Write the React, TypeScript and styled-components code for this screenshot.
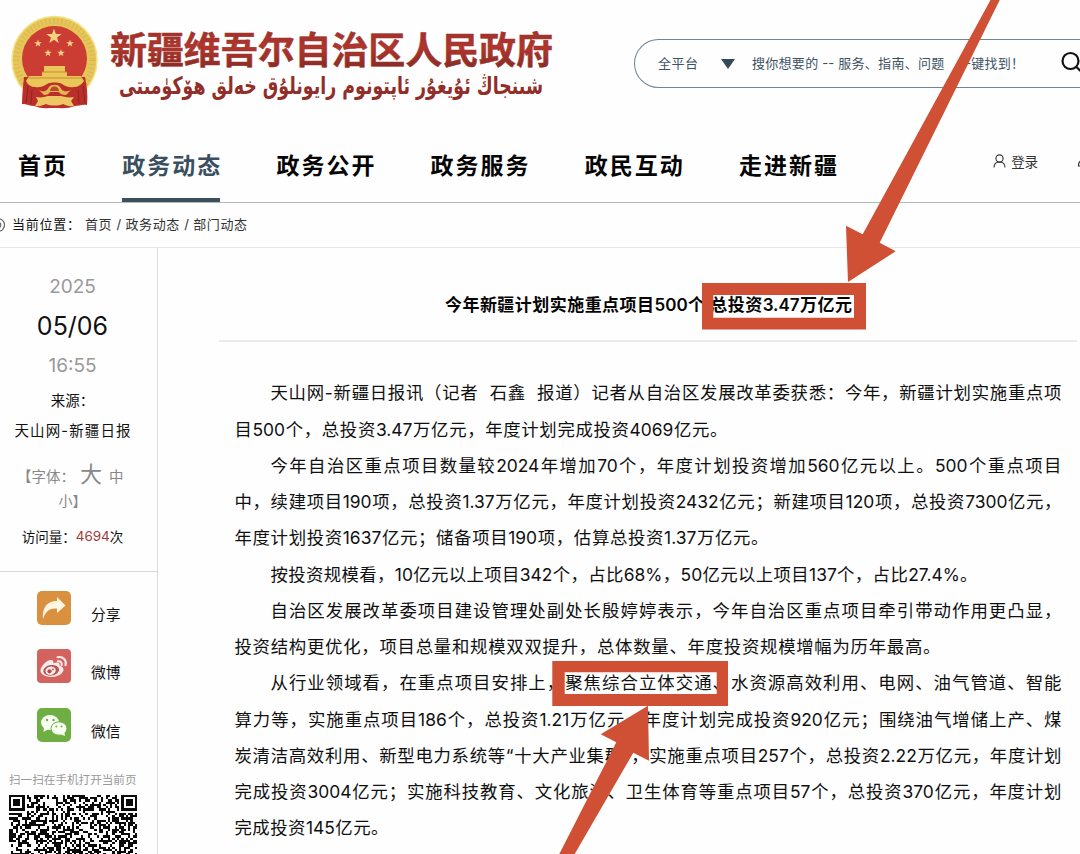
import React from 'react';
import styled, { createGlobalStyle } from 'styled-components';

const GlobalStyle = createGlobalStyle`
  * { box-sizing: border-box; }
  body {
    margin: 0;
    background: #fff;
    color: #111;
    font-family: Inter, "Noto Sans CJK SC", sans-serif;
    overflow: hidden;
  }
`;

const Page = styled.div`
  position: relative;
  width: 1080px;
  height: 854px;
  overflow: hidden;
  background: #fefefe;
`;

/* One line of text spread evenly over a measured width. */
const Spread = styled.span<{ $w: number }>`
  display: block;
  flex: none;
  width: ${(p) => p.$w}px;
  white-space: nowrap;
  text-align: justify;
  text-align-last: justify;
`;

const Header = styled.header`
  display: flex;
  justify-content: space-between;
  height: 130px;
`;

const Brand = styled.svg`
  display: block;
  flex: none;
  width: 590px;
  height: 130px;
  overflow: visible;
`;

const Search = styled.div`
  display: flex;
  align-items: center;
  width: 446px;
  height: 49px;
  margin-top: 39px;
  padding: 0 0 1px 23px;
  border: 1px solid #74848f;
  border-right: 0;
  border-radius: 25px 0 0 25px;
  color: #3d5364;
  font-size: 13px;
  line-height: 20px;
  flex: none;
`;

const Caret = styled.i`
  flex: none;
  margin: 1px 17px 0 23px;
  border: 7px solid transparent;
  border-top: 10px solid #34495a;
  border-bottom: 0;
`;

const SearchIcon = styled.svg`
  flex: none;
  width: 24px;
  height: 24px;
  margin-left: 37px;
`;

const Nav = styled.nav`
  display: flex;
  align-items: stretch;
  height: 73px;
  padding-left: 18px;
  border-bottom: 1px solid #b4b8ba;
`;

const NavItem = styled.a<{ $w: number; $active?: boolean }>`
  width: ${(p) => p.$w}px;
  flex: none;
  margin-right: 56.2px;
  padding-top: 18px;
  border-bottom: 4px solid ${(p) => (p.$active ? '#3c4f5d' : 'transparent')};
  color: ${(p) => (p.$active ? '#3a5060' : '#050505')};
  font-size: 23px;
  font-weight: 600;
  line-height: 37px;
  white-space: nowrap;
  text-align-last: justify;
`;

const Account = styled.div`
  display: flex;
  align-items: center;
  height: 20px;
  margin: 21px 0 0 100px;
  gap: 5px;
  color: #333;
  font-size: 13.5px;
  flex: none;
  svg { flex: none; }
`;

const Crumbs = styled.div`
  display: flex;
  align-items: center;
  height: 45px;
  padding-bottom: 3px;
  border-bottom: 1px solid #e6e6e6;
  font-size: 13px;
  color: #333;
`;

const CrumbLabel = styled(Spread)`
  margin-right: 5px;
  color: #111;
`;

const Pin = styled.svg`
  width: 5px;
  height: 16px;
  margin-right: 7px;
`;

const Body = styled.div`
  display: flex;
  height: 606px;
`;

const Side = styled.aside`
  width: 158px;
  flex: none;
  border-right: 1px solid #ddd;
`;

const Meta = styled.div`
  height: 324px;
  padding: 18px 0 0;
  border-bottom: 1px solid #d8d8d8;
`;

const MetaRow = styled.div<{ $h: number; $size: number; $tone?: string }>`
  display: flex;
  justify-content: center;
  align-items: center;
  width: 145px;
  height: ${(p) => p.$h}px;
  font-size: ${(p) => p.$size}px;
  color: ${(p) => p.$tone ?? '#111'};
  white-space: nowrap;
`;

const SizeRow = styled.div`
  display: flex;
  align-items: baseline;
  height: 46px;
  width: 145px;
  padding: 12px 0 0 17px;
  color: #888;
  font-size: 14.5px;
  line-height: 34px;
  white-space: nowrap;
`;

const Big = styled.span`
  font-size: 22px;
  margin: 0 7px 0 5px;
`;

const Count = styled.span`
  color: #a13a36;
`;

const Shares = styled.div`
  display: flex;
  flex-direction: column;
  gap: 24.3px;
  padding: 19px 0 0 37px;
`;

const ShareRow = styled.div`
  display: flex;
  height: 34px;
  gap: 20px;
  font-size: 14.8px;
  line-height: 20px;
  svg { flex: none; }
  span { padding-top: 14px; }
`;

const ScanNote = styled.div`
  padding: 28px 0 0 9px;
  color: #999;
  font-size: 11.6px;
  line-height: 20px;
`;

const QrSvg = styled.svg`
  display: block;
  width: 128px;
  height: 128px;
  margin: 5px 0 0 9px;
`;

const Article = styled.main`
  flex: 1;
  padding-left: 61px;
`;

const Title = styled.h1`
  width: 858px;
  height: 94px;
  margin: 0;
  padding: 44px 0 0 226px;
  border-bottom: 2px solid #eaeaea;
  font-size: 17px;
  font-weight: 600;
  line-height: 26px;
  color: #050505;
`;

const Text = styled.div`
  padding: 33.4px 0 0 15.5px;
  color: #101010;
  font-size: 17.4px;
  line-height: 36.25px;
`;

const Line = styled(Spread)<{ $indent?: boolean }>`
  height: 36.25px;
  margin-left: ${(p) => (p.$indent ? 36 : 0)}px;
`;

const Marks = styled.svg`
  position: absolute;
  inset: 0;
  width: 1080px;
  height: 854px;
  pointer-events: none;
`;

const star = (cx: number, cy: number, r: number) =>
  Array.from({ length: 10 }, (_, i) => {
    const a = -Math.PI / 2 + (i * Math.PI) / 5;
    const d = i % 2 ? r * 0.4 : r;
    return `${(cx + d * Math.cos(a)).toFixed(2)},${(cy + d * Math.sin(a)).toFixed(2)}`;
  }).join(' ');

function BrandLogo() {
  return (
    <Brand viewBox="0 0 590 130">
      <defs>
        <linearGradient id="ink" x1="0" y1="0" x2="0" y2="1">
          <stop offset="0" stopColor="#932f2a" />
          <stop offset="0.5" stopColor="#b0362d" />
          <stop offset="1" stopColor="#792823" />
        </linearGradient>
      </defs>
      <ellipse cx="54.5" cy="60" rx="42.5" ry="43.5" fill="#e6c659" stroke="#f3e48a" strokeWidth="1.5" />
      <ellipse cx="54.5" cy="60" rx="38" ry="39" fill="none" stroke="#b8933c" strokeWidth="6" strokeDasharray="1 3" opacity="0.3" />
      <ellipse cx="54.500" cy="58.500" rx="32.500" ry="32.500" fill="#cb3d32" />
      <polygon points={star(54, 36.5, 8)} fill="#f2d384" />
      {[[38, 43.5], [70, 43.5], [48, 53], [61, 53]].map(([x, y]) => (
        <polygon key={x} points={star(x, y, 4)} fill="#f2d384" />
      ))}
      <path d="M24 77c-1 9-2 19-2 27 5 0 8 2 12 2 7 3 13 2 20 2s14 1 21-2c4 0 7-2 12-1 1-9 0-19-2-28z" fill="#bb2f2b" />
      <path d="M44 66h21v6h2v4h14l3 5c-3 4-6 6-10 6-5 1-9-1-12-3-3-2-12-2-15 0-3 2-7 4-12 3-4 0-7-2-9-6l3-5h13v-4h2z" fill="#ebc759" />
      <path d="M42 72h25M28 78h54" stroke="#c78b31" strokeWidth="1" />
      <path d="M39 90c5 3 8 1 10-3 2-3 9-3 11 0 2 4 5 6 11 3l-5 5c-4 0-6-1-7-3h-9c-1 2-3 3-6 3z" fill="#e5b84f" />
      <path d="M36 97c5 1 8 0 12-1h13c4 1 8 2 13 1l-3 4 3 5c-5 1-8-1-11-2-5 2-12 2-17 0-3 1-7 3-11 2l3-5z" fill="#edc765" />
      <path d="M50 91a4.500 4.500 0 0 1 9 0z" fill="#b9492d" />
      <path d="M28 86l-2 17M32 90l-1 14M78 90l1 14M83 86l2 18" stroke="#8d2421" strokeWidth="1" />
      <text x="110" y="63.5" fill="url(#ink)" fontSize="37" fontWeight="700" fontFamily="'Noto Sans CJK SC', sans-serif" textLength="443" stroke="#9c332c" strokeWidth="0.5">
        新疆维吾尔自治区人民政府
      </text>
      <text x="543" y="93.500" direction="rtl" fill="#912e29" fontSize="24" fontWeight="700" fontFamily="'DejaVu Sans', sans-serif" textLength="424" lengthAdjust="spacingAndGlyphs">
        شىنجاڭ ئۇيغۇر ئاپتونوم رايونلۇق خەلق ھۆكۈمىتى
      </text>
    </Brand>
  );
}

function ShareIcon() {
  return (
    <svg width="34" height="34" viewBox="0 0 34 34">
      <rect width="34" height="34" rx="5" fill="#d99140" />
      <path d="M6 28C5 18 9 10 20 10V6l8.500 8.500L20 22v-4.500C13 17 9 19.500 6 28z" fill="#fff6e2" />
    </svg>
  );
}

function WeiboIcon() {
  return (
    <svg width="34" height="34" viewBox="0 0 34 34">
      <rect width="34" height="34" rx="4" fill="#d4625f" />
      <path d="M3.500 21.500c0-4 6-10.500 10.500-10.500 2.300 0 2.700 1.700 2.200 3.300 3-1.300 7.300-1.600 6.300 2.400 2.500.6 4 2 4 3.900 0 4-5.500 7.400-11.500 7.400-6.500 0-11.500-2.500-11.500-6.500z" fill="#ffeceb" />
      <ellipse cx="14.200" cy="21.300" rx="8" ry="5.300" fill="#bd5350" transform="rotate(-8 14.200 21.300)" />
      <ellipse cx="13.600" cy="21.700" rx="5.200" ry="4.200" fill="#ffeceb" transform="rotate(-15 13.600 21.700)" />
      <circle cx="12.500" cy="22.300" r="2.100" fill="#b84c4a" />
      <circle cx="16" cy="20.500" r="0.900" fill="#b84c4a" />
      <path d="M20.500 8.300c5.500-1.300 9.500 3 8 8M20.800 12.300c2.700-.5 4.500 1.300 3.800 3.900" fill="none" stroke="#ffeceb" strokeWidth="2" strokeLinecap="round" />
    </svg>
  );
}

function WechatIcon() {
  return (
    <svg width="34" height="34" viewBox="0 0 34 34">
      <rect width="34" height="34" rx="5" fill="#6fae42" />
      <ellipse cx="13" cy="14.500" rx="9" ry="7.500" fill="#f8fff2" />
      <path d="M7 19l-.5 5 5-3z" fill="#f8fff2" />
      <ellipse cx="22" cy="20.500" rx="8" ry="6.700" fill="#f8fff2" stroke="#6fae42" strokeWidth="1" />
      <path d="M23 26l5 2-1-5z" fill="#f8fff2" />
      <g fill="#6fae42">
        <circle cx="10" cy="12" r="1.200" />
        <circle cx="16.500" cy="12" r="1.200" />
        <circle cx="19.300" cy="18.500" r="1" />
        <circle cx="24.500" cy="18.500" r="1" />
      </g>
    </svg>
  );
}

const QR_SIZE = 57;

function qrPath() {
  let seed = 20250506;
  let d = '';
  for (let y = 0; y < QR_SIZE; y++) {
    for (let x = 0; x < QR_SIZE; x++) {
      seed = (Math.imul(seed, 1664525) + 1013904223) >>> 0;
      const inCorner = y < 8 && (x < 8 || x > QR_SIZE - 9);
      if (!inCorner && (seed >>> 16) % 100 < 51) d += `M${x} ${y}h1v1h-1z`;
    }
  }
  return d;
}

function QrCode() {
  return (
    <QrSvg viewBox={`0 0 ${QR_SIZE} ${QR_SIZE}`} shapeRendering="crispEdges">
      <path d={qrPath()} fill="#0a0a0a" />
      {[0, QR_SIZE - 7].map((x) => (
        <g key={x}>
          <rect x={x + 0.5} y="0.5" width="6" height="6" fill="#fff" stroke="#0a0a0a" />
          <rect x={x + 2} y="2" width="3" height="3" fill="#0a0a0a" />
        </g>
      ))}
    </QrSvg>
  );
}

const navItems = [
  { label: '首页', w: 48 },
  { label: '政务动态', w: 98, active: true },
  { label: '政务公开', w: 98 },
  { label: '政务服务', w: 98 },
  { label: '政民互动', w: 98 },
  { label: '走进新疆', w: 98 },
];

const lines: { t: string; w: number; indent?: boolean }[] = [
  { t: '天山网-新疆日报讯（记者\u00a0 石鑫\u00a0 报道）记者从自治区发展改革委获悉：今年，新疆计划实施重点项', w: 791, indent: true },
  { t: '目500个，总投资3.47万亿元，年度计划完成投资4069亿元。', w: 493 },
  { t: '今年自治区重点项目数量较2024年增加70个，年度计划投资增加560亿元以上。500个重点项目', w: 791, indent: true },
  { t: '中，续建项目190项，总投资1.37万亿元，年度计划投资2432亿元；新建项目120项，总投资7300亿元，', w: 827 },
  { t: '年度计划投资1637亿元；储备项目190项，估算总投资1.37万亿元。', w: 534 },
  { t: '按投资规模看，10亿元以上项目342个，占比68%，50亿元以上项目137个，占比27.4%。', w: 707, indent: true },
  { t: '自治区发展改革委项目建设管理处副处长殷婷婷表示，今年自治区重点项目牵引带动作用更凸显，', w: 791, indent: true },
  { t: '投资结构更优化，项目总量和规模双双提升，总体数量、年度投资规模增幅为历年最高。', w: 706 },
  { t: '从行业领域看，在重点项目安排上，聚焦综合立体交通、水资源高效利用、电网、油气管道、智能', w: 791, indent: true },
  { t: '算力等，实施重点项目186个，总投资1.21万亿元，年度计划完成投资920亿元；围绕油气增储上产、煤', w: 827 },
  { t: '炭清洁高效利用、新型电力系统等“十大产业集群”，实施重点项目257个，总投资2.22万亿元，年度计划', w: 827 },
  { t: '完成投资3004亿元；实施科技教育、文化旅游、卫生体育等重点项目57个，总投资370亿元，年度计划', w: 827 },
  { t: '完成投资145亿元。', w: 154 },
];

export default function App() {
  return (
    <Page>
      <GlobalStyle />
      <Header>
        <BrandLogo />
        <Search>
          <Spread $w={40}>全平台</Spread>
          <Caret />
          <Spread $w={272}>搜你想要的 -- 服务、指南、问题{'\u2003'}一键找到！</Spread>
          <SearchIcon viewBox="0 0 24 24" fill="none" stroke="#111" strokeWidth="2.2">
            <circle cx="9.500" cy="10" r="8" />
            <path d="M15.500 16l6 6" />
          </SearchIcon>
        </Search>
      </Header>
      <Nav>
        {navItems.map((n) => (
          <NavItem key={n.label} $w={n.w} $active={n.active}>{n.label}</NavItem>
        ))}
        <Account>
          <svg width="13" height="14" viewBox="0 0 13 14" fill="none" stroke="#333" strokeWidth="1.100">
            <circle cx="6.500" cy="4.500" r="3.600" />
            <path d="M1 13.500c0-3.500 2-5.500 5.500-5.500s5.500 2 5.500 5.500" />
          </svg>
          <Spread $w={27}>登录</Spread>
          <svg width="42" height="14" viewBox="-34 0 42 14" fill="none" stroke="#333" strokeWidth="1.100">
            <path d="M8 7H4.500V6M4.500 7C2 7 1.500 9 1.500 12H8" />
          </svg>
        </Account>
      </Nav>
      <Crumbs>
        <Pin viewBox="0 0 5 16" fill="none" stroke="#666" strokeWidth="1.200">
          <circle cx="-2" cy="9" r="6.500" />
          <circle cx="-2" cy="9" r="2.800" />
        </Pin>
        <CrumbLabel $w={68}>当前位置：</CrumbLabel>
        <Spread $w={162}>首页 / 政务动态 / 部门动态</Spread>
      </Crumbs>
      <Body>
        <Side>
          <Meta>
            <MetaRow $h={40} $size={19} $tone="#999">2025</MetaRow>
            <MetaRow $h={40} $size={25}>05/06</MetaRow>
            <MetaRow $h={38} $size={19} $tone="#999">16:55</MetaRow>
            <MetaRow $h={30} $size={14.5}>来源：</MetaRow>
            <MetaRow $h={31} $size={14.5}><Spread $w={116}>天山网-新疆日报</Spread></MetaRow>
            <SizeRow>【字体：<Big>大</Big>中</SizeRow>
            <MetaRow $h={18} $size={14} $tone="#888">小】</MetaRow>
            <MetaRow $h={54} $size={13.5}>访问量：<Count>4694</Count>次</MetaRow>
          </Meta>
          <Shares>
            <ShareRow><ShareIcon /><span>分享</span></ShareRow>
            <ShareRow><WeiboIcon /><span>微博</span></ShareRow>
            <ShareRow><WechatIcon /><span>微信</span></ShareRow>
          </Shares>
          <ScanNote>扫一扫在手机打开当前页</ScanNote>
          <QrCode />
        </Side>
        <Article>
          <Title><Spread $w={407}>今年新疆计划实施重点项目500个 总投资3.47万亿元</Spread></Title>
          <Text>
            {lines.map((l) => (
              <Line key={l.t} $w={l.w} $indent={l.indent}>{l.t}</Line>
            ))}
          </Text>
        </Article>
      </Body>
      <Marks viewBox="0 0 1080 854" fill="#cf5034">
        <path d="M990.500 0H999.700L879.700 242.700 895.700 251.300 848 282 846 225.700 862.700 234.300z" />
        <path d="M648 705.700L600.700 734.300 616.300 742.300 559.300 854H574.700L633.300 752.700 649 760.700z" />
        <path fillRule="evenodd" d="M702 283H866V329.500H702zM713.300 295V317.700H854V295z" />
        <path fillRule="evenodd" d="M552.300 661H728V706H552.300zM564.700 672.300V694H716.700V672.300z" />
      </Marks>
    </Page>
  );
}
